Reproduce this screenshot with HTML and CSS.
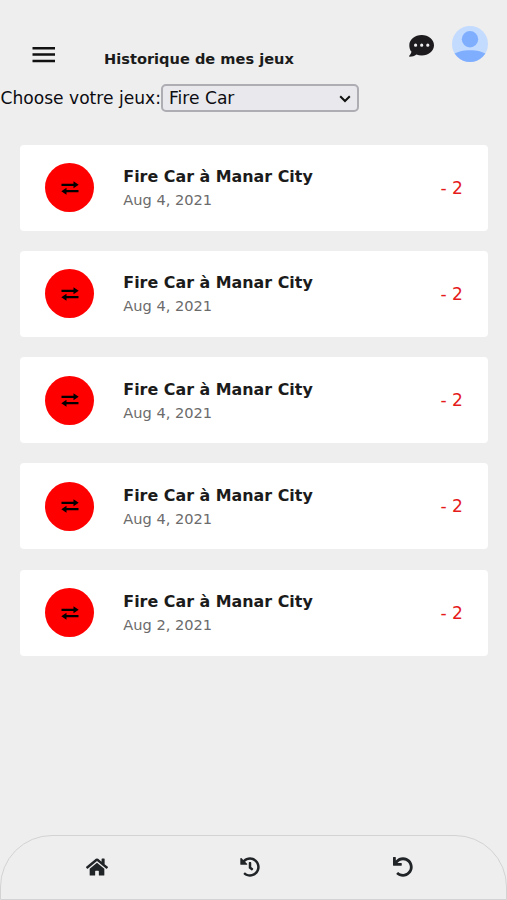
FILE: index.html
```html
<!DOCTYPE html>
<html lang="fr">
<head>
<meta charset="utf-8">
<title>Historique de mes jeux</title>
<link rel="stylesheet" href="styles.css">
</head>
<body>
<header class="topbar">
  <svg class="menu" viewBox="0 0 23 16"><path d="M.5 1.300h22.500M.5 7.600h22.500M.5 13.900h22.500" stroke="#111" stroke-width="2.5"/></svg>
  <h1 class="title">Historique de mes jeux</h1>
  <svg class="chat" viewBox="0 0 25 22"><path fill="#1d1b1e" fill-rule="evenodd" d="M12.7 0C19.500 0 25 4.500 25 10.200s-5.500 10.200-12.300 10.200c-1.900 0-3.700-.3-5.300-1C5.600 20.700 3.200 21.700.700 21.700c-.6 0-.8-.6-.4-1 .1-.1 1.700-1.900 2.200-3.900C.900 15 .300 12.700.300 10.200.300 4.500 5.900 0 12.700 0zM6.600 8.600a1.600 1.600 0 1 0 0 3.200 1.600 1.600 0 0 0 0-3.200zm6.100 0a1.600 1.600 0 1 0 0 3.200 1.600 1.600 0 0 0 0-3.200zm6.100 0a1.600 1.600 0 1 0 0 3.200 1.600 1.600 0 0 0 0-3.200z"/></svg>
  <svg class="avatar" viewBox="0 0 36 36"><defs><clipPath id="round"><circle cx="18" cy="18" r="18"/></clipPath></defs><circle cx="18" cy="18" r="18" fill="#c3dbff"/><g fill="#80aeff" clip-path="url(#round)"><circle cx="18" cy="13.200" r="8.200"/><path d="M1 28.500c4-2.800 10.300-4.300 17-4.300s13 1.500 17 4.300V37H1z"/></g></svg>
</header>
<div class="filter">
  <label class="filter-label" for="game">Choose votre jeux:</label>
  <div class="select-box">
    <select id="game" class="select"><option>Fire Car</option></select>
    <svg class="chevron" viewBox="0 0 12 8"><path d="M1.200 1.200L6 6l4.800-4.800" fill="none" stroke="#111" stroke-width="2"/></svg>
  </div>
</div>
<svg width="0" height="0" class="sprite"><symbol id="swap" viewBox="0 0 18 14"><path d="M.5 2.700h12V.3L17.700 3.800l-5.200 3.500V4.900H.5zM17.500 9.100h-12V6.700L.3 10.200l5.200 3.500v-2.400h12z"/></symbol></svg>
<main class="list">
  <article class="card"><span class="badge"><svg class="swap"><use href="#swap"/></svg></span><div class="info"><h2 class="name">Fire Car à Manar City</h2><p class="date">Aug 4, 2021</p></div><span class="amount">- 2</span></article>
  <article class="card"><span class="badge"><svg class="swap"><use href="#swap"/></svg></span><div class="info"><h2 class="name">Fire Car à Manar City</h2><p class="date">Aug 4, 2021</p></div><span class="amount">- 2</span></article>
  <article class="card"><span class="badge"><svg class="swap"><use href="#swap"/></svg></span><div class="info"><h2 class="name">Fire Car à Manar City</h2><p class="date">Aug 4, 2021</p></div><span class="amount">- 2</span></article>
  <article class="card"><span class="badge"><svg class="swap"><use href="#swap"/></svg></span><div class="info"><h2 class="name">Fire Car à Manar City</h2><p class="date">Aug 4, 2021</p></div><span class="amount">- 2</span></article>
  <article class="card"><span class="badge"><svg class="swap"><use href="#swap"/></svg></span><div class="info"><h2 class="name">Fire Car à Manar City</h2><p class="date">Aug 2, 2021</p></div><span class="amount">- 2</span></article>
</main>
<nav class="tabs">
  <svg class="home" viewBox="0 0 576 512"><path d="M280.37 148.26L96 300.11V464a16 16 0 0 0 16 16l112.06-.29a16 16 0 0 0 15.92-16V368a16 16 0 0 1 16-16h64a16 16 0 0 1 16 16v95.64a16 16 0 0 0 16 16.05L464 480a16 16 0 0 0 16-16V300L295.67 148.26a12.19 12.19 0 0 0-15.3 0zM571.6 251.47L488 182.56V44.05a12 12 0 0 0-12-12h-56a12 12 0 0 0-12 12v72.61L318.47 43a48 48 0 0 0-61 0L4.34 251.47a12 12 0 0 0-1.6 16.9l25.5 31A12 12 0 0 0 45.15 301l235.22-193.74a12.19 12.19 0 0 1 15.3 0L530.9 301a12 12 0 0 0 16.9-1.6l25.5-31a12 12 0 0 0-1.7-16.93z"/></svg>
  <svg class="tab-icon" viewBox="0 0 512 512"><path d="M504 255.531c.253 136.64-111.18 248.372-247.82 248.468-59.015.042-113.223-20.53-155.822-54.911-11.077-8.94-11.905-25.541-1.839-35.607l11.267-11.267c8.609-8.609 22.353-9.551 31.891-1.984C173.062 425.135 212.781 440 256 440c101.705 0 184-82.311 184-184 0-101.705-82.311-184-184-184-48.814 0-93.149 18.969-126.068 49.932l50.754 50.754c10.08 10.08 2.941 27.314-11.313 27.314H24c-8.837 0-16-7.163-16-16V38.627c0-14.254 17.234-21.393 27.314-11.314l49.372 49.372C129.209 34.136 189.552 8 256 8c136.81 0 247.747 110.781 248 247.531zm-180.912 78.784l9.823-12.63c8.138-10.463 6.253-25.542-4.21-33.679L288 256.349V152c0-13.255-10.745-24-24-24h-16c-13.255 0-24 10.745-24 24v135.651l65.409 50.874c10.463 8.137 25.541 6.253 33.679-4.21z"/></svg>
  <svg class="tab-icon" viewBox="0 0 512 512"><path d="M212.333 224.333H12c-6.627 0-12-5.373-12-12V12C0 5.373 5.373 0 12 0h48c6.627 0 12 5.373 12 12v78.112C117.773 39.279 184.26 7.47 258.175 8.007c136.906.994 246.448 111.623 246.157 248.532C504.041 393.258 393.12 504 256.333 504c-64.089 0-122.496-24.313-166.51-64.215-5.099-4.622-5.334-12.554-.467-17.42l33.967-33.967c4.474-4.474 11.662-4.717 16.401-.525C170.76 415.336 211.58 432 256.333 432c97.268 0 176-78.716 176-176 0-97.267-78.716-176-176-176-58.496 0-110.28 28.476-142.274 72.333h98.274c6.627 0 12 5.373 12 12v48c0 6.627-5.373 12-12 12z"/></svg>
</nav>
</body>
</html>
```
FILE: styles.css
```css
* { box-sizing: border-box; }
body { margin: 0; height: 900px; overflow: hidden; display: flex; flex-direction: column; background: #eee; color: #1b1b1b; font-family: "DejaVu Sans", sans-serif; }
.topbar { display: flex; align-items: flex-start; height: 84px; flex: none; padding-left: 32px; }
.menu { width: 23px; height: 16px; margin-top: 47px; }
.title { margin: 49px 0 0 49px; width: 305px; font-size: 14.6px; line-height: 20px; font-weight: 700; white-space: nowrap; }
.chat { width: 25px; height: 22px; margin-top: 34.5px; flex: none; }
.avatar { width: 36px; height: 36px; margin: 26px 0 0 18px; flex: none; }
.filter { display: flex; height: 28px; flex: none; padding-left: 0.5px; color: #0c0c12; font-size: 17.1px; }
.filter-label { width: 160.5px; line-height: 28px; white-space: nowrap; }
.select-box { position: relative; width: 197.5px; height: 28px; }
.select { appearance: none; width: 100%; height: 100%; margin: 0; padding: 0 6px 1px; border: 2px solid #adadb3; border-radius: 5px; background: #e9e9ed; color: inherit; font: inherit; }
.chevron { position: absolute; right: 7.5px; top: 11px; width: 12px; height: 8px; }
.sprite { position: absolute; }
.list { display: flex; flex-direction: column; gap: 20.3px; padding: 32.5px 19px 0 20.3px; flex: 1; }
.card { display: flex; align-items: center; height: 86px; flex: none; border-radius: 4px; background: #fff; padding: 0 25px; }
.badge { display: flex; align-items: center; justify-content: center; width: 49px; height: 49px; border-radius: 50%; background: #f00; }
.swap { width: 18px; height: 14px; }
.info { margin-left: 29px; padding-top: 1.4px; flex: 1; }
.name { margin: 0; font-size: 15.9px; line-height: 23px; white-space: nowrap; }
.date { margin: 0; font-size: 14.6px; line-height: 23px; color: #6b6b6b; }
.amount { color: #e51b1b; font-size: 17.1px; }
.tabs { display: flex; align-items: center; justify-content: space-between; height: 65px; flex: none; padding: 0 93px 1px 84.5px; border: 1px solid #d3d3d3; border-radius: 52px 52px 0 0; fill: #212427; }
.home { width: 22px; height: 20px; }
.tab-icon { width: 20px; height: 20px; }
```
